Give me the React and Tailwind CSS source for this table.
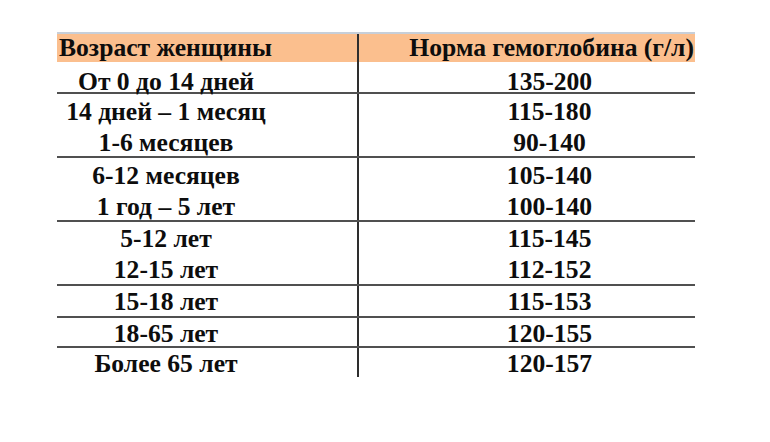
import React from "react";

const groups = [
  { h: "h-[32px]", pt: "pt-[4px]", rows: [["От 0 до 14 дней", "135-200"]], border: true },
  { h: "h-[64px]", pt: "pt-[2px]", rows: [["14 дней – 1 месяц", "115-180"], ["1-6 месяцев", "90-140"]], border: true },
  { h: "h-[64px]", pt: "pt-[2px]", rows: [["6-12 месяцев", "105-140"], ["1 год – 5 лет", "100-140"]], border: true },
  { h: "h-[64px]", pt: "pt-[1px]", rows: [["5-12 лет", "115-145"], ["12-15 лет", "112-152"]], border: true },
  { h: "h-[32px]", pt: "pt-0", rows: [["15-18 лет", "115-153"]], border: true },
  { h: "h-[30px]", pt: "pt-0", rows: [["18-65 лет", "120-155"]], border: true },
  { h: "h-[29px]", pt: "pt-0", rows: [["Более 65 лет", "120-157"]], border: false },
];

export default function App() {
  return (
    <div className="w-[770px] h-[442px] bg-white pt-[32px] pl-[57px] text-[#0d0d0d] font-bold text-[25.6px] font-['Liberation_Serif','Times_New_Roman',serif]">
      <div className="w-[638px] border-t-2 border-[#c7cfd9]">
        <div className="flex h-[28px] bg-[#fbbf8e] leading-[28px]">
          <div className="w-[302px] border-r-2 border-[#2e2e2e] pl-[2px] whitespace-nowrap">
            Возраст женщины
          </div>
          <div className="flex-1 pr-[1px] text-right whitespace-nowrap">
            Норма гемоглобина (г/л)
          </div>
        </div>
        {groups.map((g, i) => (
          <div
            key={i}
            className={`flex box-border ${g.h} ${g.border ? "border-b-2 border-[#505050]" : ""}`}
          >
            <div className={`w-[302px] border-r-2 border-[#2e2e2e] pr-[82px] text-center leading-[31px] ${g.pt}`}>
              {g.rows.map((r, j) => (
                <div key={j} className="whitespace-nowrap">{r[0]}</div>
              ))}
            </div>
            <div className={`flex-1 pl-[45px] text-center leading-[31px] ${g.pt}`}>
              {g.rows.map((r, j) => (
                <div key={j} className="whitespace-nowrap">{r[1]}</div>
              ))}
            </div>
          </div>
        ))}
      </div>
    </div>
  );
}
